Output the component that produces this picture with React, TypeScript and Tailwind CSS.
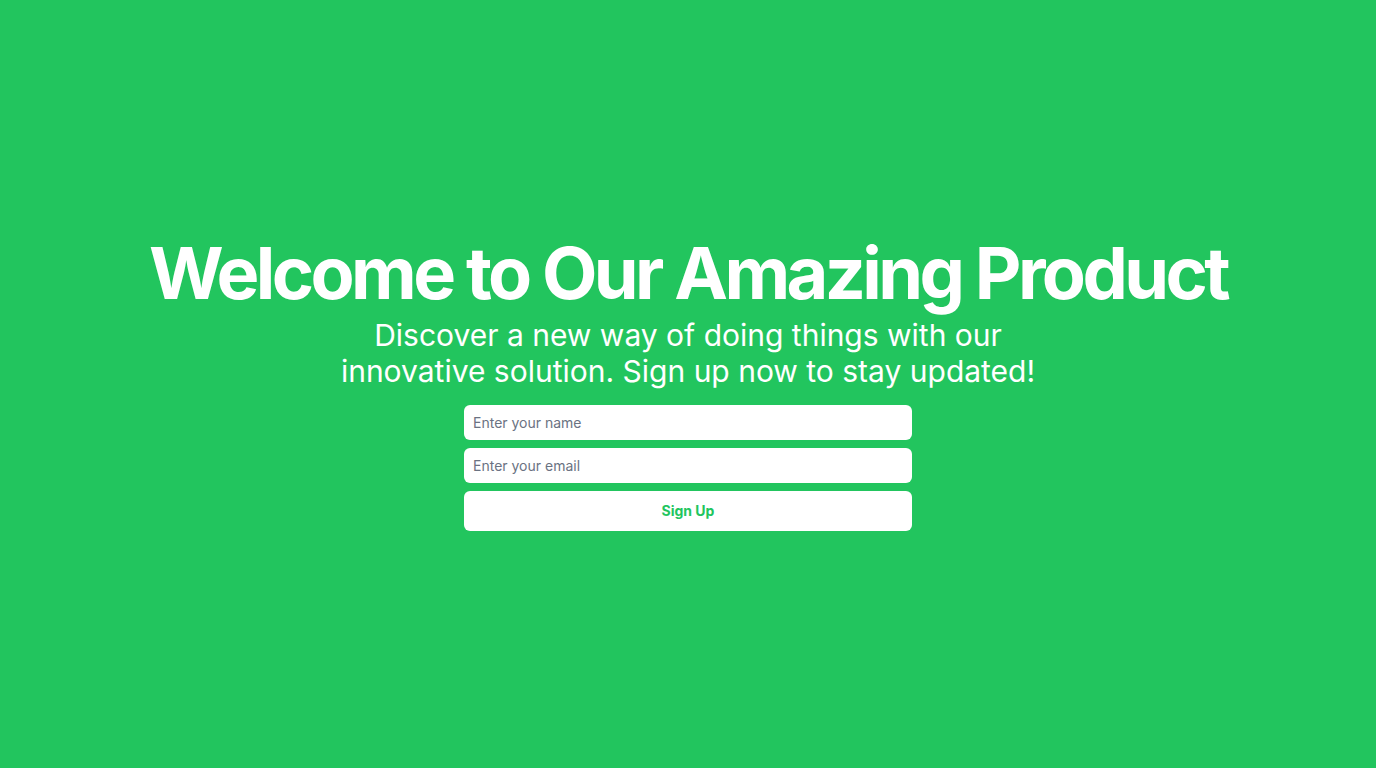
export default function App() {
  return (
    <div
      className="min-h-screen bg-[#22c55e] flex flex-col items-center justify-center text-center"
      style={{ fontFamily: "Inter, 'Noto Sans', sans-serif" }}
    >
      <h1 className="text-7xl leading-none font-bold tracking-tighter text-white">
        Welcome to Our Amazing Product
      </h1>
      <p className="mt-2 max-w-[720px] text-3xl text-white">
        Discover a new way of doing things with our innovative solution. Sign up now to stay updated!
      </p>
      <form className="mt-4 w-full max-w-md flex flex-col gap-2" onSubmit={(e) => e.preventDefault()}>
        <input
          type="text"
          placeholder="Enter your name"
          className="h-[35px] w-full rounded-md bg-white px-[9px] text-sm text-gray-900 placeholder:text-gray-500 outline-none"
        />
        <input
          type="email"
          placeholder="Enter your email"
          className="h-[35px] w-full rounded-md bg-white px-[9px] text-sm text-gray-900 placeholder:text-gray-500 outline-none"
        />
        <button
          type="submit"
          className="h-10 w-full rounded-md bg-white text-sm font-bold text-[#22c55e]"
        >
          Sign Up
        </button>
      </form>
    </div>
  );
}
